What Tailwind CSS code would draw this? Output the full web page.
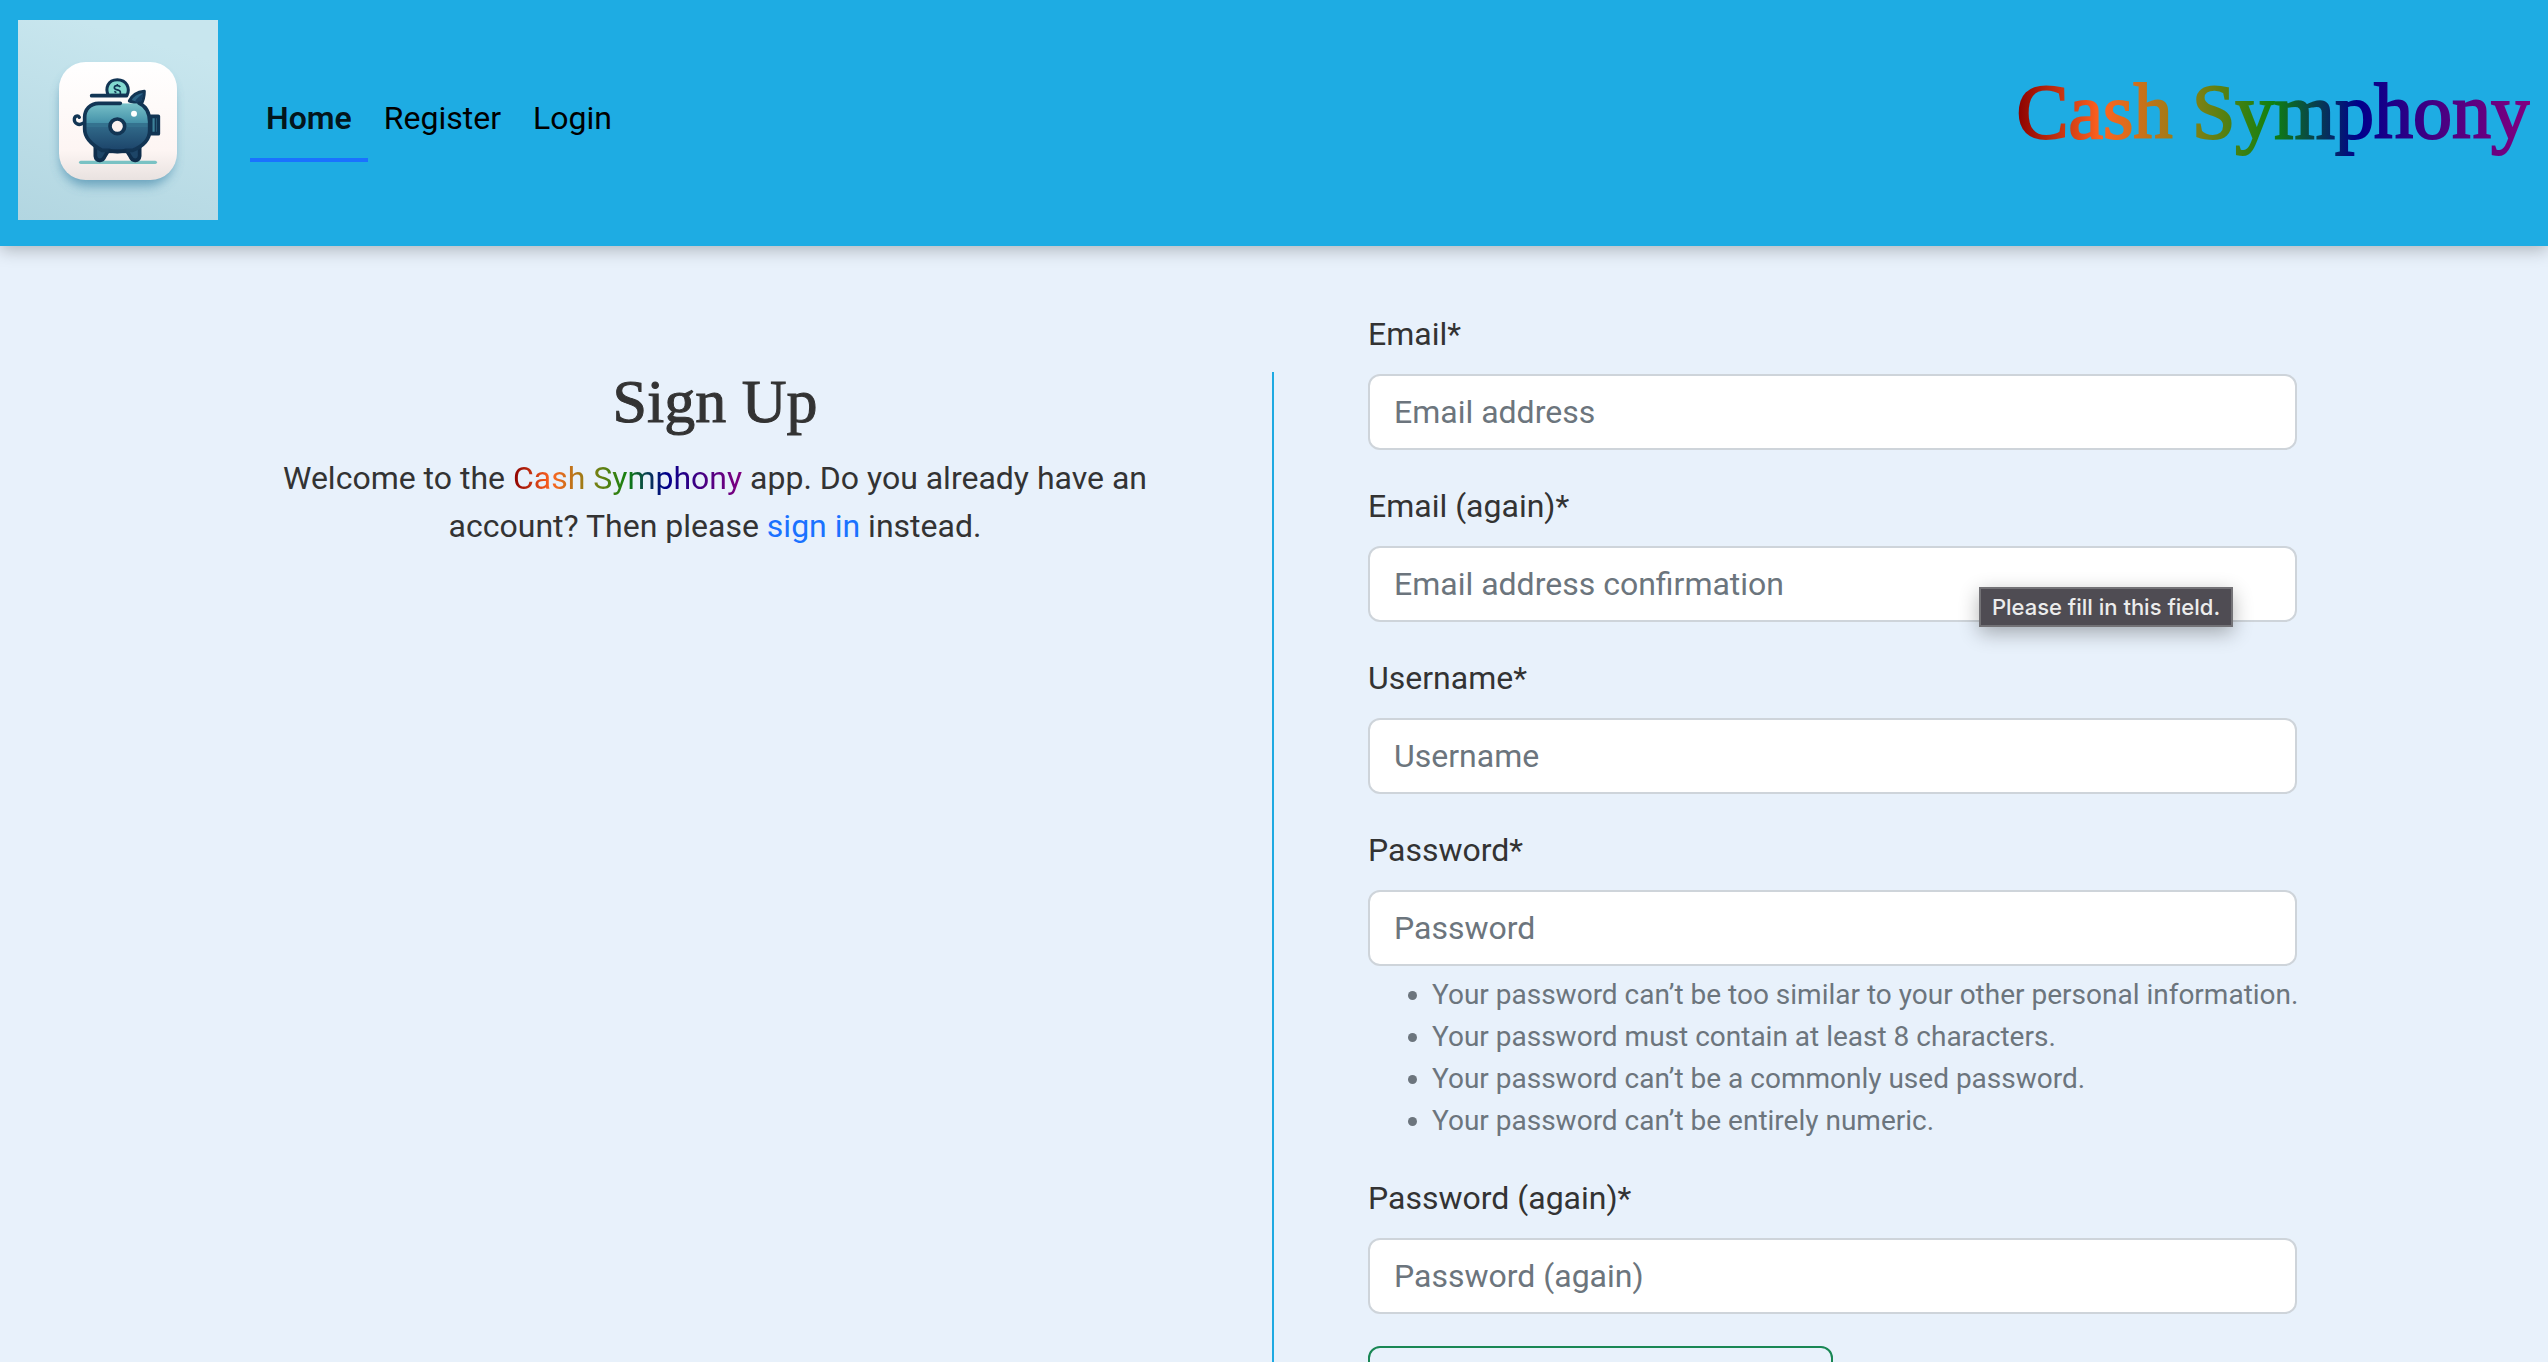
<!DOCTYPE html>
<html lang="en">
<head>
<meta charset="utf-8">
<meta name="viewport" content="width=device-width, initial-scale=1">
<title>Cash Symphony - Sign Up</title>
<script src="https://cdn.jsdelivr.net/npm/@tailwindcss/browser@4"></script>
</head>
<body class="min-h-screen bg-[#e8f1fb] font-['Roboto',sans-serif] text-[32px] leading-[48px] text-[#333333]">
<header class="relative flex items-center bg-[#1eace3] px-[18px] pt-5 pb-[26px] shadow-[0_4px_16px_rgba(0,0,0,0.25)]">
  <a href="#" aria-label="Cash Symphony home" class="block shrink-0">
    <svg class="block size-[200px]" viewBox="54 60 600 600" aria-hidden="true">
      <defs>
        <linearGradient id="sky" x1="0.3" y1="0" x2="0" y2="1"><stop offset="0" stop-color="#c8e6ee"/><stop offset="1" stop-color="#b2d6e1"/></linearGradient>
        <linearGradient id="tile" x1="0" y1="0" x2="0" y2="1"><stop offset="0" stop-color="#ffffff"/><stop offset="0.75" stop-color="#fdf5f3"/><stop offset="1" stop-color="#e9e2e0"/></linearGradient>
        <linearGradient id="top" x1="0" y1="0" x2="0" y2="1"><stop offset="0" stop-color="#7cc5cb"/><stop offset="1" stop-color="#4390a8"/></linearGradient>
        <linearGradient id="low" x1="0" y1="0" x2="0" y2="1"><stop offset="0" stop-color="#306888"/><stop offset="1" stop-color="#1b4268"/></linearGradient>
        <clipPath id="belly"><path d="M290 310H410C433 318 449 338 449 365V392C446 420 424 440 410 451H306C278 436 254 418 254 388V352C254 326 268 310 290 310Z"/></clipPath>
        <filter id="soft" x="-30%" y="-30%" width="160%" height="160%"><feGaussianBlur stdDeviation="16"/></filter>
      </defs>
      <rect x="54" y="60" width="600" height="600" fill="url(#sky)"/>
      <rect x="182" y="215" width="338" height="342" rx="78" fill="#4d8faf" opacity="0.75" filter="url(#soft)"/>
      <rect x="177" y="186" width="354" height="354" rx="80" fill="url(#tile)"/>
      <path d="M242 487H466" stroke="#79c2c4" stroke-width="10" stroke-linecap="round"/>
      <path d="M248 370C236 378 222 370 223 357C224 347 234 345 238 352" fill="none" stroke="#123554" stroke-width="10" stroke-linecap="round"/>
      <path d="M286 432V468C288 484 308 486 314 470L326 450ZM419 432V468C417 484 397 486 391 470L379 450Z" fill="#1d4567" stroke="#0f2e4c" stroke-width="11" stroke-linejoin="round"/>
      <path d="M452 349H475V401H452Z" fill="#3c8199" stroke="#123554" stroke-width="11" stroke-linejoin="round"/>
      <path d="M466 350V400" stroke="#123554" stroke-width="4"/>
      <path d="M388 303C396 286 414 276 433 274C433 290 430 302 423 314Z" fill="#2d6587" stroke="#123554" stroke-width="9" stroke-linejoin="round"/>
      <path d="M404 305C411 295 420 287 431 280L421 311Z" fill="#174166"/>
      <g clip-path="url(#belly)">
        <rect x="250" y="305" width="205" height="66" fill="url(#top)"/>
        <rect x="250" y="380" width="205" height="75" fill="url(#low)"/>
        <rect x="250" y="369" width="205" height="12" fill="#34728f"/>
      </g>
      <path d="M361 310H296C270 310 254 330 254 352V388C254 418 278 436 306 451H326Q352 459 379 451H398C424 440 449 420 449 392V365C448 338 438 318 418 310" fill="none" stroke="#123554" stroke-width="11" stroke-linecap="round" stroke-linejoin="round"/>
      <path d="M326 454H379" stroke="#0f2e4c" stroke-width="11"/>
      <circle cx="352" cy="379" r="22" fill="#fbf1ef" stroke="#123554" stroke-width="11"/>
      <circle cx="402" cy="341" r="9" fill="#ffffff"/>
      <path d="M325 286C315 266 323 239 352 239C381 239 391 266 381 286Z" fill="#83dad0" stroke="#123554" stroke-width="9"/>
      <path d="M275 287H379" stroke="#123554" stroke-width="11" stroke-linecap="round"/>
      <path d="M361 261C357 255 343 255 343 263C343 272 361 267 361 276V283M343 274L349 278M352 252V259" fill="none" stroke="#123554" stroke-width="5"/>
    </svg>
  </a>
  <nav class="ml-8 flex text-black" aria-label="Main">
    <a href="#" aria-current="page" class="border-b-4 border-[#1a72ff] px-4 py-4 font-semibold text-black/90">Home</a>
    <a href="#" class="border-b-4 border-transparent px-4 py-4">Register</a>
    <a href="#" class="border-b-4 border-transparent px-4 py-4">Login</a>
  </nav>
  <a href="#" class="ml-auto bg-[linear-gradient(to_right,#8b0000,#ff6420,#8b8014,#108010,#00008b,#4b0082,#800080)] bg-clip-text pb-4 font-['Liberation_Serif',serif] text-[78px] leading-[92px] text-transparent [-webkit-text-stroke:2px_transparent]">Cash Symphony</a>
</header>

<main class="mx-auto grid max-w-[2280px] grid-cols-2 pt-16">
  <section class="mt-[62px] border-r-2 border-[#1daae2] px-[64px] pl-[88px] text-center">
    <h1 class="mb-6 font-['Liberation_Serif',serif] text-[62px] leading-[58px] [-webkit-text-stroke:1px_#333333]">Sign Up</h1>
    <p>Welcome to the <span class="bg-[linear-gradient(to_right,#8b0000,#ff6420,#8b8014,#108010,#00008b,#4b0082,#800080)] bg-clip-text text-transparent">Cash Symphony</span> app. Do you already have an account? Then please <a href="#" class="text-[#1a72ff]">sign in</a> instead.</p>
  </section>

  <form class="flex flex-col gap-8 pr-[117px] pl-[94px]" novalidate>
    <div class="flex flex-col gap-4">
      <label for="email">Email*</label>
      <input id="email" type="email" placeholder="Email address" class="h-[76px] w-full rounded-xl border-2 border-[#ced4da] bg-white px-6 placeholder:text-[#6c757d]">
    </div>
    <div class="flex flex-col gap-4">
      <label for="email2">Email (again)*</label>
      <div class="relative">
        <input id="email2" type="email" placeholder="Email address confirmation" aria-describedby="hint" class="block h-[76px] w-full rounded-xl border-2 border-[#ced4da] bg-white px-6 placeholder:text-[#6c757d]">
        <div id="hint" role="tooltip" class="absolute top-[41px] right-16 flex h-10 w-[254px] items-center justify-center border-2 border-[#737276] bg-[#4f4c53] font-['Inter',sans-serif] text-[22px] leading-7 font-medium whitespace-nowrap text-[#ececec] shadow-[0_6px_20px_rgba(0,0,0,0.3)]">Please fill in this field.</div>
      </div>
    </div>
    <div class="flex flex-col gap-4">
      <label for="username">Username*</label>
      <input id="username" type="text" placeholder="Username" class="h-[76px] w-full rounded-xl border-2 border-[#ced4da] bg-white px-6 placeholder:text-[#6c757d]">
    </div>
    <div class="flex flex-col gap-4">
      <label for="password">Password*</label>
      <div>
        <input id="password" type="password" placeholder="Password" aria-describedby="rules" class="block h-[76px] w-full rounded-xl border-2 border-[#ced4da] bg-white px-6 placeholder:text-[#6c757d]">
        <ul id="rules" class="mt-2 list-disc pl-16 text-[28px] leading-[42px] whitespace-nowrap text-[#6c757d]">
          <li>Your password can’t be too similar to your other personal information.</li>
          <li>Your password must contain at least 8 characters.</li>
          <li>Your password can’t be a commonly used password.</li>
          <li>Your password can’t be entirely numeric.</li>
        </ul>
      </div>
    </div>
    <div class="flex flex-col gap-4">
      <label for="password2">Password (again)*</label>
      <input id="password2" type="password" placeholder="Password (again)" class="h-[76px] w-full rounded-xl border-2 border-[#ced4da] bg-white px-6 placeholder:text-[#6c757d]">
    </div>
    <button type="submit" class="h-24 w-1/2 rounded-xl border-2 border-[#198754] text-[#198754]">Sign Up</button>
  </form>
</main>
</body>
</html>
